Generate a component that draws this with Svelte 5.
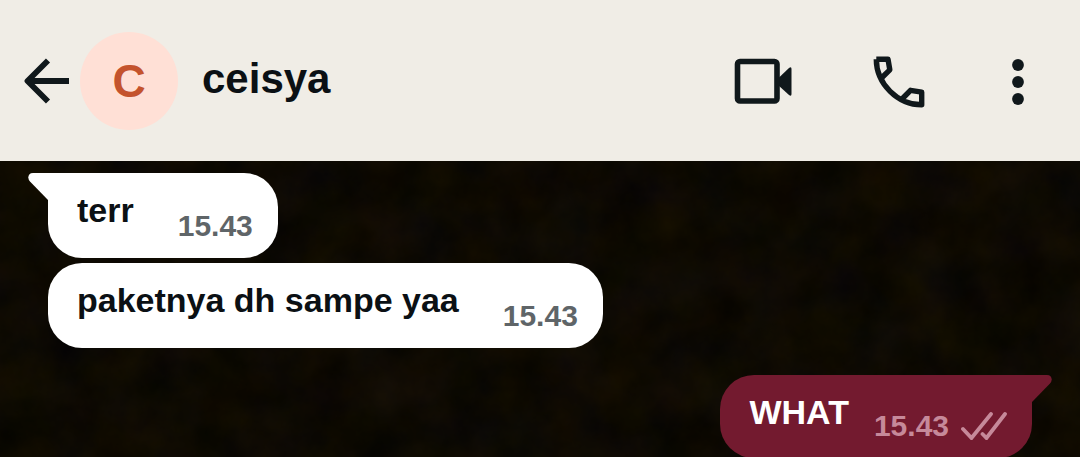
<script>
  const contact = { name: 'ceisya', initial: 'C' };
  const messages = [
    { text: 'terr', time: '15.43', out: false, tail: true },
    { text: 'paketnya dh sampe yaa', time: '15.43', out: false, tail: false },
    { text: 'WHAT', time: '15.43', out: true, tail: true }
  ];
</script>

<div class="screen">
  <header>
    <button class="back" aria-label="Back">
      <svg width="48" height="48" viewBox="0 0 48 48">
        <path d="M25 3.500 4.500 24l20.500 20.500M4.500 24h41.500" fill="none" stroke="currentColor" stroke-width="5.800" stroke-linejoin="round" />
      </svg>
    </button>
    <div class="avatar" aria-hidden="true">{contact.initial}</div>
    <h1>{contact.name}</h1>
    <nav>
      <button aria-label="Video call">
        <svg width="58" height="48" viewBox="0 0 58 48">
          <rect x="3.500" y="3.500" width="39.500" height="39.500" rx="2.500" fill="none" stroke="currentColor" stroke-width="5.600" />
          <path d="M44 20.500 55 10q2.500-2 2.500 1v25q0 3-2.500 1L44 27z" fill="currentColor" />
        </svg>
      </button>
      <button aria-label="Voice call">
        <svg width="52" height="52" viewBox="0 0 52 52">
          <path d="M3.300 3.300H15L16.800 13.800 9 21.500M3.300 3.300C3.300 28 25 48.800 48.700 48.800V36.200L37.500 34.300 29.500 42.500" fill="none" stroke="currentColor" stroke-width="5.400" stroke-linejoin="round" />
        </svg>
      </button>
      <button aria-label="More options">
        <svg width="12" height="48" viewBox="0 0 12 48" fill="currentColor">
          <circle cx="6" cy="7" r="5.900" />
          <circle cx="6" cy="24" r="5.900" />
          <circle cx="6" cy="41" r="5.900" />
        </svg>
      </button>
    </nav>
  </header>

  <main>
    <svg class="wallpaper" width="100%" height="100%" aria-hidden="true">
      <filter id="grain" x="0" y="0" width="100%" height="100%" color-interpolation-filters="sRGB">
        <feTurbulence type="fractalNoise" baseFrequency="0.02" numOctaves="5" seed="8" />
        <feColorMatrix values="0.08 0 0 0 0.012  0.05 0.02 0 0 0.002  0 0 0.05 0 -0.018  0 0 0 0 1" />
      </filter>
      <rect width="100%" height="100%" filter="url(#grain)" />
    </svg>
    {#each messages as m}
      <article class="bubble" class:out={m.out} class:tail={m.tail}>
        {#if m.tail}
          <svg class="point" width="21" height="28" viewBox="0 0 21 28" aria-hidden="true">
            <path d="M21 0H5C0 0-1 5 2 8.500L20 27h1z" fill="currentColor" />
          </svg>
        {/if}
        <p>{m.text}</p>
        <div class="meta">
          <time>{m.time}</time>
          {#if m.out}
            <svg width="46" height="28" viewBox="0 0 46 28" role="img" aria-label="Delivered">
              <path d="M2 17 10.500 26 30 2M21.500 22 25.500 26 44 2" fill="none" stroke="currentColor" stroke-width="3.800" stroke-linecap="round" />
            </svg>
          {/if}
        </div>
      </article>
    {/each}
  </main>
</div>

<style>
  :global(body) {
    margin: 0;
  }
  .screen {
    display: flex;
    flex-direction: column;
    height: 100vh;
    overflow: hidden;
    font-family: "Liberation Sans", Arial, sans-serif;
    font-weight: 700;
    color: #0b1014;
  }
  header {
    display: flex;
    align-items: center;
    flex-shrink: 0;
    padding: 32px 56px 31px 23px;
    background: #f0ede6;
  }
  button {
    display: flex;
    padding: 0;
    border: 0;
    background: none;
    color: #10181b;
    cursor: pointer;
  }
  .avatar {
    display: grid;
    place-items: center;
    width: 98px;
    height: 98px;
    margin: 0 24px 0 9px;
    border-radius: 50%;
    background: #ffe0d6;
    color: #c4532d;
    font-size: 46px;
  }
  h1 {
    flex: 1;
    margin: 0;
    font-size: 42px;
    line-height: 52px;
    padding-bottom: 4px;
  }
  nav {
    display: flex;
    align-items: center;
    gap: 81px;
    padding-top: 1px;
  }
  nav button:last-child {
    margin-left: 6px;
  }
  main {
    position: relative;
    flex: 1;
    display: flex;
    flex-direction: column;
    align-items: flex-start;
    gap: 5px;
    padding: 12px 48px;
    background: #0e0a02;
  }
  .wallpaper {
    position: absolute;
    inset: 0;
  }
  .bubble {
    position: relative;
    display: flex;
    flex-shrink: 0;
    gap: 44px;
    padding: 17px 25px 15px 29px;
    border-radius: 34px;
    background: #fff;
  }
  .bubble.tail {
    border-top-left-radius: 0;
  }
  .bubble.out {
    align-self: flex-end;
    gap: 25px;
    margin-top: 22px;
    border-radius: 34px 0 34px 34px;
    background: #731a2f;
    color: #fff;
  }
  .point {
    position: absolute;
    top: 0;
    left: -20px;
    color: #fff;
  }
  .out .point {
    left: auto;
    right: -20px;
    color: #731a2f;
    transform: scaleX(-1);
  }
  p {
    margin: 0;
    font-size: 34px;
    line-height: 40px;
  }
  .meta {
    display: flex;
    align-items: center;
    gap: 12px;
    padding-top: 19px;
    font-size: 30px;
    line-height: 34px;
    color: #5f6568;
  }
  .out .meta {
    padding-top: 17px;
    color: #c6899a;
  }
</style>
